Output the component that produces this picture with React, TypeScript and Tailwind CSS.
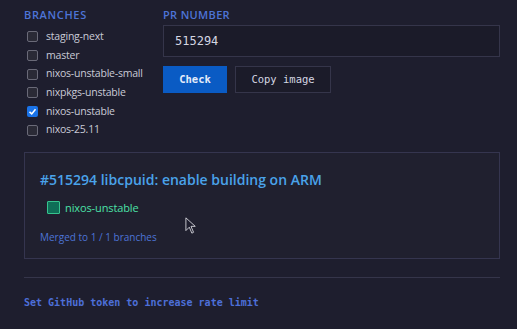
import { useState } from 'react'

const branches = [
  { name: 'staging-next', checked: false },
  { name: 'master', checked: false },
  { name: 'nixos-unstable-small', checked: false },
  { name: 'nixpkgs-unstable', checked: false },
  { name: 'nixos-unstable', checked: true },
  { name: 'nixos-25.11', checked: false },
]

const sans = "font-['Open_Sans',sans-serif]"
const mono = "font-['DejaVu_Sans_Mono',monospace]"

function BranchRow({ name, checked }: { name: string; checked: boolean }) {
  return (
    <label className="flex h-[18.7px] items-center gap-[8px] whitespace-nowrap">
      {checked ? (
        <span className="flex h-[11px] w-[11px] shrink-0 items-center justify-center rounded-[2px] bg-[#1a73e8]">
          <svg viewBox="0 0 12 12" className="h-[9px] w-[9px]">
            <path d="M2 6.5 L5 9.2 L10 3" fill="none" stroke="white" strokeWidth="2" />
          </svg>
        </span>
      ) : (
        <span className="h-[11px] w-[11px] shrink-0 rounded-[2px] border border-[#6a6a78] bg-[#2a2a36]" />
      )}
      <span className="text-[10.5px] tracking-[-0.02em] text-[#c9cad6]">{name}</span>
    </label>
  )
}

export default function App() {
  const [pr, setPr] = useState('515294')

  return (
    <div className={`relative min-h-[329px] w-full bg-[#1e1e2e] pl-[24px] pr-[17px] pt-[7px] ${sans}`}>
      <div className="flex gap-[8px]">
        <div className="w-[131px] shrink-0">
          <div className="mb-[4px] text-[11px] font-semibold tracking-[0.06em] text-[#4d74d6]">BRANCHES</div>
          <div className="pl-[3px]">
            {branches.map(b => (
              <BranchRow key={b.name} {...b} />
            ))}
          </div>
        </div>

        <div className="flex-1">
          <div className="mb-[1.5px] text-[11px] font-semibold tracking-[0.03em] text-[#4d74d6]">PR NUMBER</div>
          <input
            value={pr}
            onChange={e => setPr(e.target.value)}
            className={`h-[32px] w-full border border-[#35354a] bg-[#1b1b29] px-[11px] text-[12px] text-[#d4d6e2] outline-none ${mono}`}
          />
          <div className="mt-[9px] flex gap-[8px]">
            <button className={`h-[27px] w-[64px] bg-[#0a5bc4] text-[10.5px] font-bold text-[#e4ecfa] ${mono}`}>Check</button>
            <button className={`h-[27px] w-[96px] border border-[#35354a] bg-[#1b1b29] text-[10.5px] text-[#d4d6e2] ${mono}`}>Copy image</button>
          </div>
        </div>
      </div>

      <div className="mt-[12px] h-[107px] border border-[#35354f] bg-[#20202f] px-[15px] pt-[16px]">
        <div className="text-[14px] font-semibold text-[#4aa3ea]">#515294 libcpuid: enable building on ARM</div>
        <div className="mt-[10px] flex items-center gap-[5px] pl-[7px]">
          <span className="h-[13px] w-[13px] rounded-[1px] border border-[#35c48e] bg-[#0f6e57]" />
          <span className="text-[11px] tracking-[-0.01em] text-[#4be0a8]">nixos-unstable</span>
        </div>
        <div className="mt-[14px] text-[10px] text-[#4d74d6]">Merged to 1 / 1 branches</div>
      </div>

      <div className="mt-[18px] border-t border-[#35354a]" />
      <div className={`mt-[17px] text-[10px] font-bold text-[#4d6fd8] ${mono}`}>Set GitHub token to increase rate limit</div>

      <svg viewBox="0 0 14 20" className="pointer-events-none absolute left-[185px] top-[217px] h-[17px] w-[12px]">
        <path d="M1 1 L1 16 L5 12 L8 19 L10 18 L7 11 L12 11 Z" fill="#1e1e2e" stroke="#e0e0e6" strokeWidth="1" />
      </svg>
    </div>
  )
}
